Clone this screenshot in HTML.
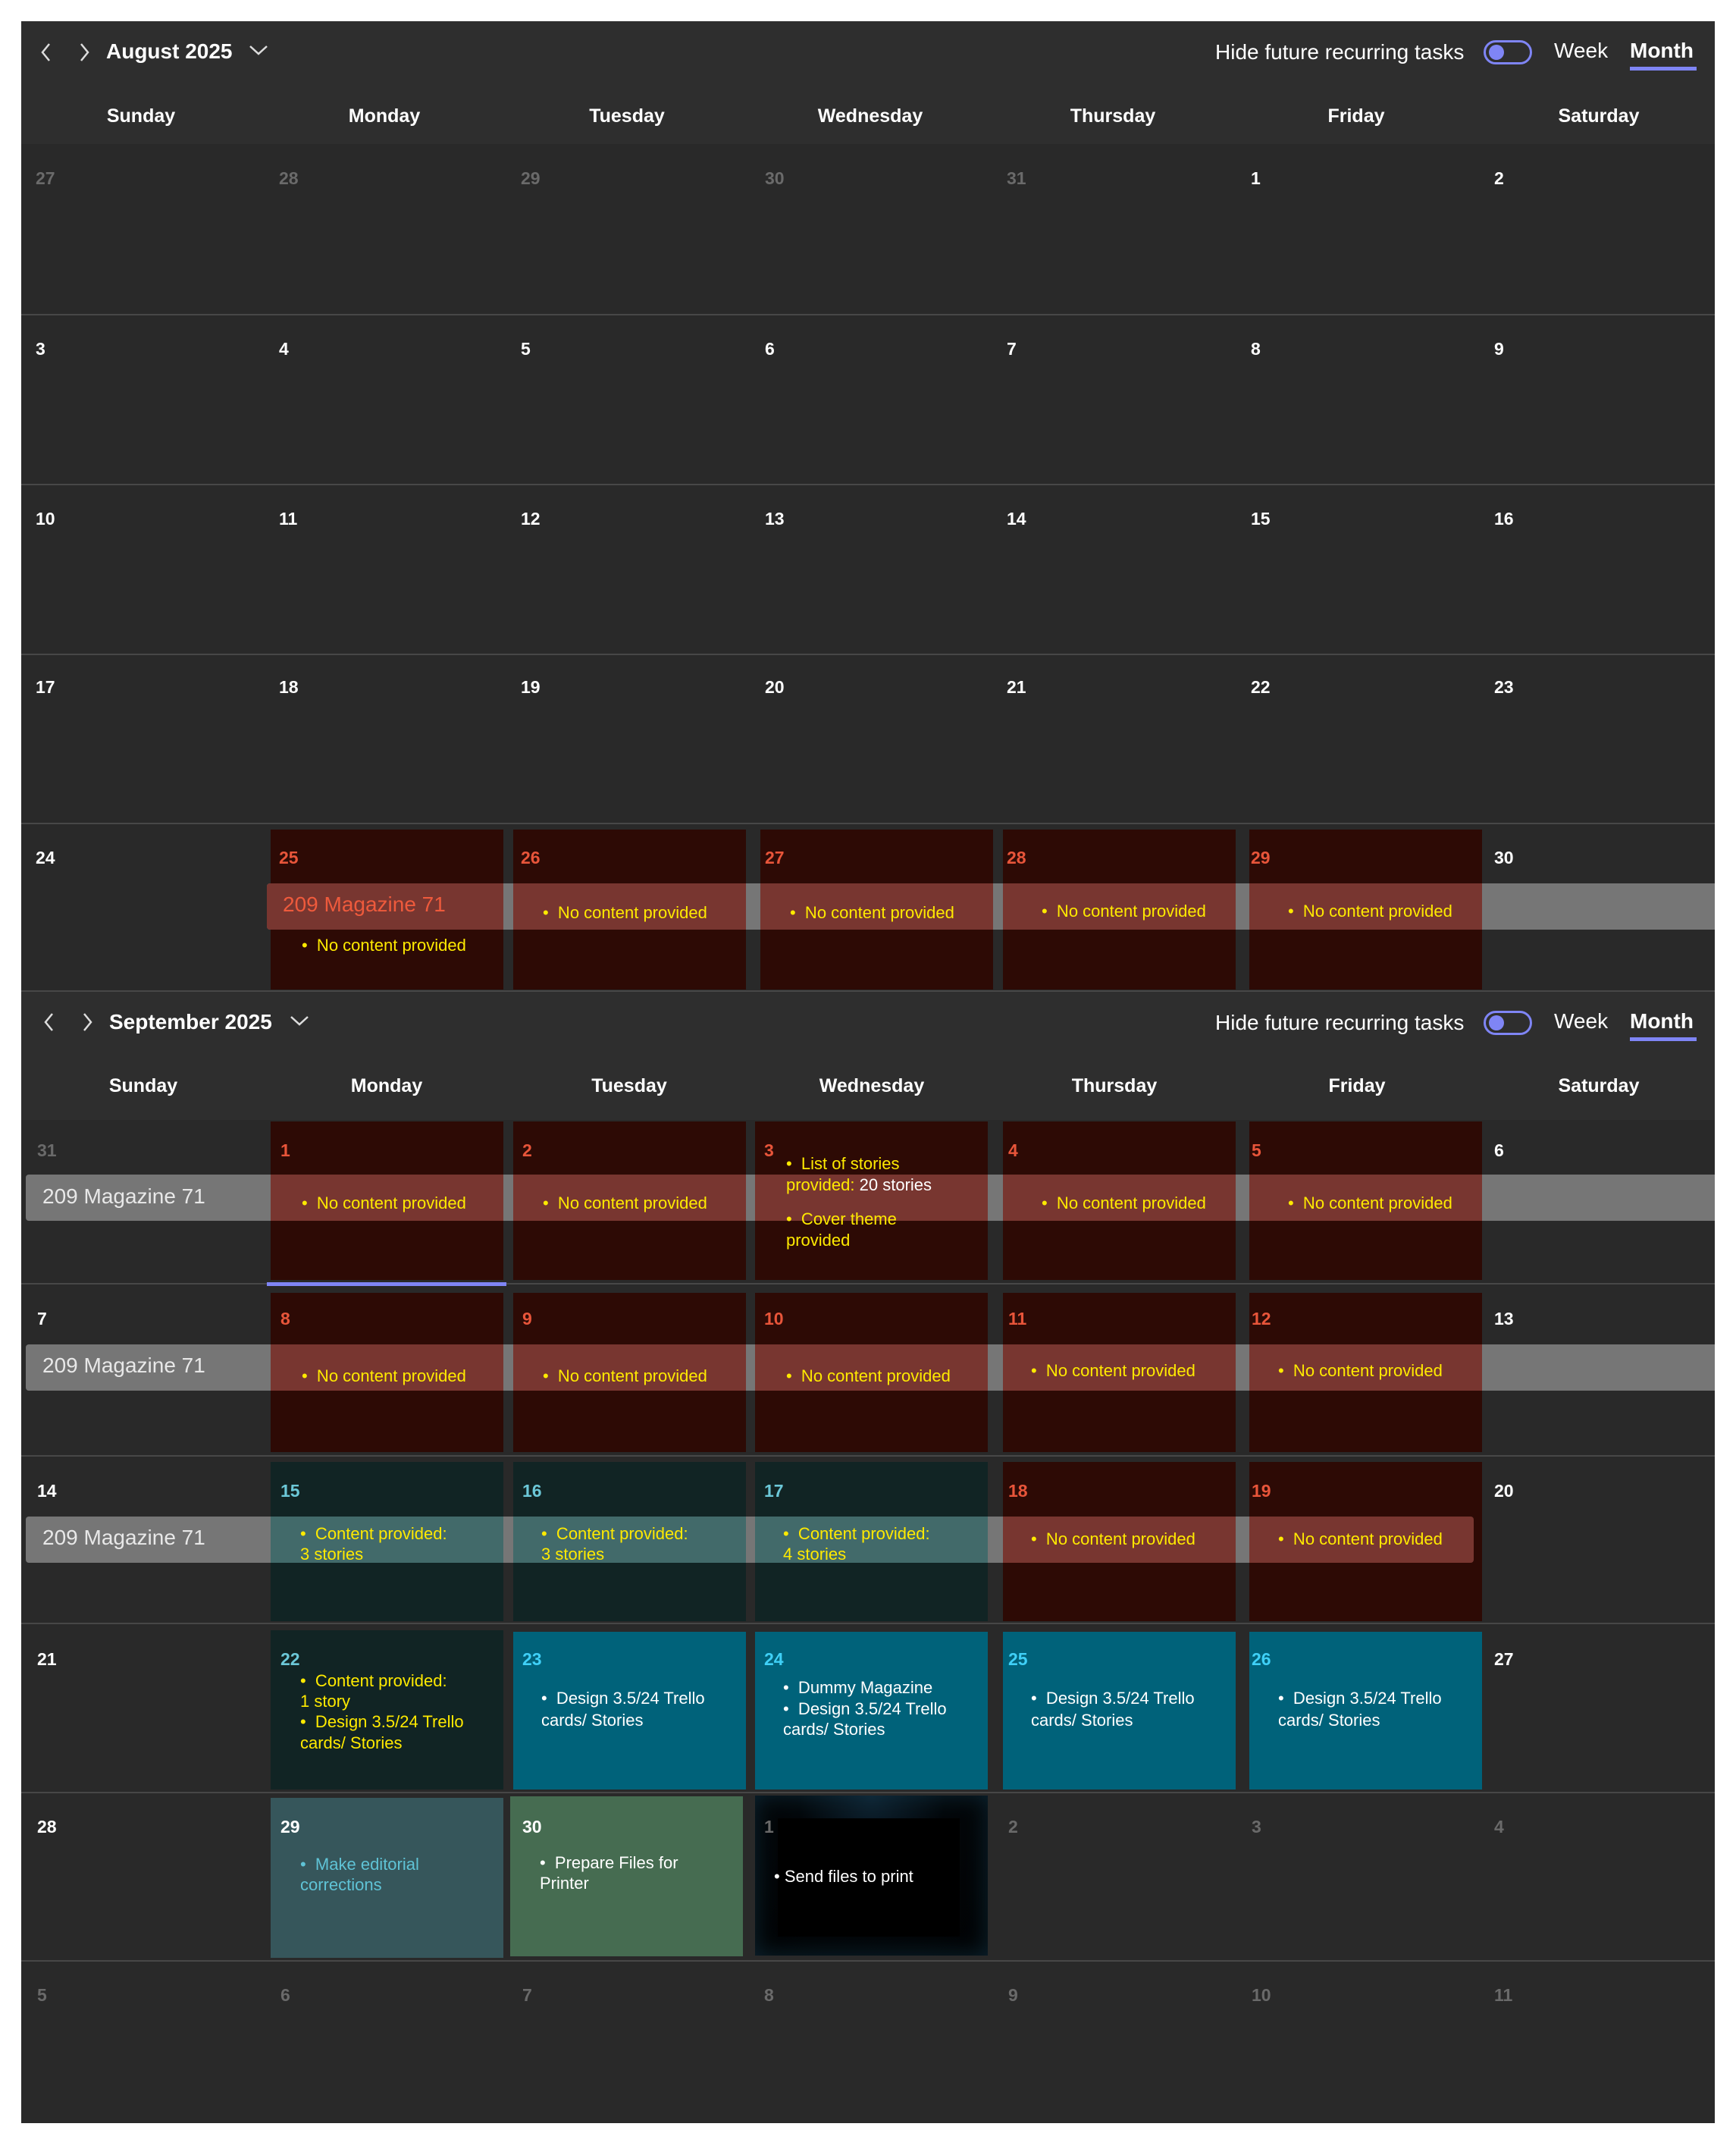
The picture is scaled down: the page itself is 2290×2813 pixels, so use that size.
<!DOCTYPE html>
<html><head><meta charset="utf-8">
<style>
*{margin:0;padding:0;box-sizing:border-box}
body{width:2290px;height:2813px;background:#fff;position:relative;overflow:hidden;font-family:"Liberation Sans",sans-serif}
.p{position:absolute;left:28px;top:28px;width:2234px;height:2772px;background:#292929}
.a{position:absolute}
.hd{position:absolute;left:28px;width:2234px;background:#2e2e2e}
.ln{position:absolute;left:28px;width:2234px;height:2px;background:#474747}
.wd{position:absolute;font-size:25px;font-weight:bold;color:#fff;transform:translateX(-50%);line-height:30px}
.d{position:absolute;font-size:23px;font-weight:bold;color:#fff;line-height:28px}
.g{color:#6a6a6a}
.r{color:#e8553a}
.tl{color:#6cc8d8}
.cy{color:#3fd0f7}
.b{position:absolute}
.red{background:#2d0a05}
.dt{background:#112424}
.bl{background:#00627a}
.band{position:absolute;background:#767676;height:61px}
.bp{position:absolute;height:61px}
.t{position:absolute;font-size:22px;line-height:27px;color:#ffea00;white-space:nowrap}
.w{color:#fff}
.mg{position:absolute;font-size:28px;line-height:34px;white-space:nowrap}
.ttl{position:absolute;font-size:28px;font-weight:bold;color:#fff;line-height:34px}
.rt{position:absolute;font-size:28px;color:#fff;line-height:34px;white-space:nowrap}
.tog{position:absolute;width:64px;height:32px;border:3px solid #7f85f5;border-radius:16px}
.tog:after{content:"";position:absolute;left:4px;top:3px;width:20px;height:20px;border-radius:50%;background:#7f85f5}
.ul{position:absolute;height:5px;background:#7f85f5}
</style></head><body>
<div class="p"></div>

<!-- August header -->
<div class="hd" style="top:28px;height:162px"></div>
<svg class="a" style="left:50px;top:54px" width="80" height="30" viewBox="0 0 80 30"><path d="M15 4 L6 15 L15 26" fill="none" stroke="#ddd" stroke-width="2.5"/><path d="M57 4 L66 15 L57 26" fill="none" stroke="#ddd" stroke-width="2.5"/></svg>
<div class="ttl" style="left:140px;top:51px">August 2025</div>
<svg class="a" style="left:328px;top:58px" width="26" height="16"><path d="M2 3 L13 13 L24 3" fill="none" stroke="#ddd" stroke-width="2.5"/></svg>
<div class="rt" style="left:1603px;top:52px">Hide future recurring tasks</div>
<div class="tog" style="left:1957px;top:53px"></div>
<div class="rt" style="left:2050px;top:50px">Week</div>
<div class="rt" style="left:2150px;top:50px;font-weight:bold">Month</div>
<div class="ul" style="left:2150px;top:88px;width:88px"></div>
<div class="wd" style="left:186px;top:138px">Sunday</div>
<div class="wd" style="left:507px;top:138px">Monday</div>
<div class="wd" style="left:827px;top:138px">Tuesday</div>
<div class="wd" style="left:1148px;top:138px">Wednesday</div>
<div class="wd" style="left:1468px;top:138px">Thursday</div>
<div class="wd" style="left:1789px;top:138px">Friday</div>
<div class="wd" style="left:2109px;top:138px">Saturday</div>

<div class="ln" style="top:414px"></div>
<div class="ln" style="top:638px"></div>
<div class="ln" style="top:862px"></div>
<div class="ln" style="top:1085px"></div>

<!-- Aug dates -->
<div class="d g" style="left:47px;top:221px">27</div><div class="d g" style="left:368px;top:221px">28</div><div class="d g" style="left:687px;top:221px">29</div><div class="d g" style="left:1009px;top:221px">30</div><div class="d g" style="left:1328px;top:221px">31</div><div class="d" style="left:1650px;top:221px">1</div><div class="d" style="left:1971px;top:221px">2</div>
<div class="d" style="left:47px;top:446px">3</div><div class="d" style="left:368px;top:446px">4</div><div class="d" style="left:687px;top:446px">5</div><div class="d" style="left:1009px;top:446px">6</div><div class="d" style="left:1328px;top:446px">7</div><div class="d" style="left:1650px;top:446px">8</div><div class="d" style="left:1971px;top:446px">9</div>
<div class="d" style="left:47px;top:670px">10</div><div class="d" style="left:368px;top:670px">11</div><div class="d" style="left:687px;top:670px">12</div><div class="d" style="left:1009px;top:670px">13</div><div class="d" style="left:1328px;top:670px">14</div><div class="d" style="left:1650px;top:670px">15</div><div class="d" style="left:1971px;top:670px">16</div>
<div class="d" style="left:47px;top:892px">17</div><div class="d" style="left:368px;top:892px">18</div><div class="d" style="left:687px;top:892px">19</div><div class="d" style="left:1009px;top:892px">20</div><div class="d" style="left:1328px;top:892px">21</div><div class="d" style="left:1650px;top:892px">22</div><div class="d" style="left:1971px;top:892px">23</div>

<!-- Aug row 5 -->
<div class="band" style="left:352px;top:1165px;width:1910px;border-radius:4px 0 0 4px"></div>
<div class="b red" style="left:357px;top:1094px;width:307px;height:211px"><div class="bp" style="left:-5px;top:71px;width:312px;background:#783630;border-radius:4px 0 0 4px"></div></div>
<div class="b red" style="left:677px;top:1094px;width:307px;height:211px"><div class="bp" style="left:0;top:71px;width:307px;background:#783630"></div></div>
<div class="b red" style="left:1003px;top:1094px;width:307px;height:211px"><div class="bp" style="left:0;top:71px;width:307px;background:#783630"></div></div>
<div class="b red" style="left:1323px;top:1094px;width:307px;height:211px"><div class="bp" style="left:0;top:71px;width:307px;background:#783630"></div></div>
<div class="b red" style="left:1648px;top:1094px;width:307px;height:211px"><div class="bp" style="left:0;top:71px;width:307px;background:#783630"></div></div>
<div class="d" style="left:47px;top:1117px">24</div><div class="d r" style="left:368px;top:1117px">25</div><div class="d r" style="left:687px;top:1117px">26</div><div class="d r" style="left:1009px;top:1117px">27</div><div class="d r" style="left:1328px;top:1117px">28</div><div class="d r" style="left:1650px;top:1117px">29</div><div class="d" style="left:1971px;top:1117px">30</div>
<div class="mg" style="left:373px;top:1176px;color:#ee5a3c">209 Magazine 71</div>
<div class="t" style="left:398px;top:1233px">•&nbsp; No content provided</div>
<div class="t" style="left:716px;top:1190px">•&nbsp; No content provided</div>
<div class="t" style="left:1042px;top:1190px">•&nbsp; No content provided</div>
<div class="t" style="left:1374px;top:1188px">•&nbsp; No content provided</div>
<div class="t" style="left:1699px;top:1188px">•&nbsp; No content provided</div>

<!-- September header -->
<div class="ln" style="top:1306px"></div>
<div class="hd" style="top:1308px;height:169px"></div>
<svg class="a" style="left:54px;top:1333px" width="80" height="30" viewBox="0 0 80 30"><path d="M15 4 L6 15 L15 26" fill="none" stroke="#ddd" stroke-width="2.5"/><path d="M57 4 L66 15 L57 26" fill="none" stroke="#ddd" stroke-width="2.5"/></svg>
<div class="ttl" style="left:144px;top:1331px">September 2025</div>
<svg class="a" style="left:382px;top:1338px" width="26" height="16"><path d="M2 3 L13 13 L24 3" fill="none" stroke="#ddd" stroke-width="2.5"/></svg>
<div class="rt" style="left:1603px;top:1332px">Hide future recurring tasks</div>
<div class="tog" style="left:1957px;top:1333px"></div>
<div class="rt" style="left:2050px;top:1330px">Week</div>
<div class="rt" style="left:2150px;top:1330px;font-weight:bold">Month</div>
<div class="ul" style="left:2150px;top:1368px;width:88px"></div>
<div class="wd" style="left:189px;top:1417px">Sunday</div>
<div class="wd" style="left:510px;top:1417px">Monday</div>
<div class="wd" style="left:830px;top:1417px">Tuesday</div>
<div class="wd" style="left:1150px;top:1417px">Wednesday</div>
<div class="wd" style="left:1470px;top:1417px">Thursday</div>
<div class="wd" style="left:1790px;top:1417px">Friday</div>
<div class="wd" style="left:2109px;top:1417px">Saturday</div>

<div class="ln" style="top:1692px"></div>
<div class="ln" style="top:1919px"></div>
<div class="ln" style="top:2140px"></div>
<div class="ln" style="top:2363px"></div>
<div class="ln" style="top:2585px"></div>

<!-- Sep row1 -->
<div class="band" style="left:34px;top:1549px;width:2228px;border-radius:4px 0 0 4px"></div>
<div class="b red" style="left:357px;top:1479px;width:307px;height:209px"><div class="bp" style="left:0;top:70px;width:307px;background:#783630"></div></div>
<div class="b red" style="left:677px;top:1479px;width:307px;height:209px"><div class="bp" style="left:0;top:70px;width:307px;background:#783630"></div></div>
<div class="b red" style="left:996px;top:1479px;width:307px;height:209px"><div class="bp" style="left:0;top:70px;width:307px;background:#783630"></div></div>
<div class="b red" style="left:1323px;top:1479px;width:307px;height:209px"><div class="bp" style="left:0;top:70px;width:307px;background:#783630"></div></div>
<div class="b red" style="left:1648px;top:1479px;width:307px;height:209px"><div class="bp" style="left:0;top:70px;width:307px;background:#783630"></div></div>
<div class="ul" style="left:352px;top:1691px;width:316px;height:5px"></div>
<div class="d g" style="left:49px;top:1503px">31</div><div class="d r" style="left:370px;top:1503px">1</div><div class="d r" style="left:689px;top:1503px">2</div><div class="d r" style="left:1008px;top:1503px">3</div><div class="d r" style="left:1330px;top:1503px">4</div><div class="d r" style="left:1651px;top:1503px">5</div><div class="d" style="left:1971px;top:1503px">6</div>
<div class="mg w" style="left:56px;top:1561px;color:#e8e8e8">209 Magazine 71</div>
<div class="t" style="left:398px;top:1573px">•&nbsp; No content provided</div>
<div class="t" style="left:716px;top:1573px">•&nbsp; No content provided</div>
<div class="t" style="left:1037px;top:1521px">•&nbsp; List of stories</div>
<div class="t" style="left:1037px;top:1549px">provided: <span class="w">20 stories</span></div>
<div class="t" style="left:1037px;top:1594px">•&nbsp; Cover theme</div>
<div class="t" style="left:1037px;top:1622px">provided</div>
<div class="t" style="left:1374px;top:1573px">•&nbsp; No content provided</div>
<div class="t" style="left:1699px;top:1573px">•&nbsp; No content provided</div>

<!-- Sep row2 -->
<div class="band" style="left:34px;top:1773px;width:2228px;border-radius:4px 0 0 4px"></div>
<div class="b red" style="left:357px;top:1705px;width:307px;height:210px"><div class="bp" style="left:0;top:68px;width:307px;background:#783630"></div></div>
<div class="b red" style="left:677px;top:1705px;width:307px;height:210px"><div class="bp" style="left:0;top:68px;width:307px;background:#783630"></div></div>
<div class="b red" style="left:996px;top:1705px;width:307px;height:210px"><div class="bp" style="left:0;top:68px;width:307px;background:#783630"></div></div>
<div class="b red" style="left:1323px;top:1705px;width:307px;height:210px"><div class="bp" style="left:0;top:68px;width:307px;background:#783630"></div></div>
<div class="b red" style="left:1648px;top:1705px;width:307px;height:210px"><div class="bp" style="left:0;top:68px;width:307px;background:#783630"></div></div>
<div class="d" style="left:49px;top:1725px">7</div><div class="d r" style="left:370px;top:1725px">8</div><div class="d r" style="left:689px;top:1725px">9</div><div class="d r" style="left:1008px;top:1725px">10</div><div class="d r" style="left:1330px;top:1725px">11</div><div class="d r" style="left:1651px;top:1725px">12</div><div class="d" style="left:1971px;top:1725px">13</div>
<div class="mg" style="left:56px;top:1784px;color:#e8e8e8">209 Magazine 71</div>
<div class="t" style="left:398px;top:1801px">•&nbsp; No content provided</div>
<div class="t" style="left:716px;top:1801px">•&nbsp; No content provided</div>
<div class="t" style="left:1037px;top:1801px">•&nbsp; No content provided</div>
<div class="t" style="left:1360px;top:1794px">•&nbsp; No content provided</div>
<div class="t" style="left:1686px;top:1794px">•&nbsp; No content provided</div>

<!-- Sep row3 -->
<div class="band" style="left:34px;top:2000px;width:1910px;border-radius:4px"></div>
<div class="b dt" style="left:357px;top:1928px;width:307px;height:210px"><div class="bp" style="left:0;top:72px;width:307px;background:#426a6a"></div></div>
<div class="b dt" style="left:677px;top:1928px;width:307px;height:210px"><div class="bp" style="left:0;top:72px;width:307px;background:#426a6a"></div></div>
<div class="b dt" style="left:996px;top:1928px;width:307px;height:210px"><div class="bp" style="left:0;top:72px;width:307px;background:#426a6a"></div></div>
<div class="b red" style="left:1323px;top:1928px;width:307px;height:210px"><div class="bp" style="left:0;top:72px;width:307px;background:#783630"></div></div>
<div class="b red" style="left:1648px;top:1928px;width:307px;height:210px"><div class="bp" style="left:0;top:72px;width:296px;background:#783630;border-radius:0 4px 4px 0"></div></div>
<div class="d" style="left:49px;top:1952px">14</div><div class="d tl" style="left:370px;top:1952px">15</div><div class="d tl" style="left:689px;top:1952px">16</div><div class="d tl" style="left:1008px;top:1952px">17</div><div class="d r" style="left:1330px;top:1952px">18</div><div class="d r" style="left:1651px;top:1952px">19</div><div class="d" style="left:1971px;top:1952px">20</div>
<div class="mg" style="left:56px;top:2011px;color:#e8e8e8">209 Magazine 71</div>
<div class="t" style="left:396px;top:2009px">•&nbsp; Content provided:</div><div class="t" style="left:396px;top:2036px">3 stories</div>
<div class="t" style="left:714px;top:2009px">•&nbsp; Content provided:</div><div class="t" style="left:714px;top:2036px">3 stories</div>
<div class="t" style="left:1033px;top:2009px">•&nbsp; Content provided:</div><div class="t" style="left:1033px;top:2036px">4 stories</div>
<div class="t" style="left:1360px;top:2016px">•&nbsp; No content provided</div>
<div class="t" style="left:1686px;top:2016px">•&nbsp; No content provided</div>

<!-- Sep row4 -->
<div class="b dt" style="left:357px;top:2150px;width:307px;height:210px"></div>
<div class="b bl" style="left:677px;top:2152px;width:307px;height:208px"></div>
<div class="b bl" style="left:996px;top:2152px;width:307px;height:208px"></div>
<div class="b bl" style="left:1323px;top:2152px;width:307px;height:208px"></div>
<div class="b bl" style="left:1648px;top:2152px;width:307px;height:208px"></div>
<div class="d" style="left:49px;top:2174px">21</div><div class="d tl" style="left:370px;top:2174px">22</div><div class="d cy" style="left:689px;top:2174px">23</div><div class="d cy" style="left:1008px;top:2174px">24</div><div class="d cy" style="left:1330px;top:2174px">25</div><div class="d cy" style="left:1651px;top:2174px">26</div><div class="d" style="left:1971px;top:2174px">27</div>
<div class="t" style="left:396px;top:2203px">•&nbsp; Content provided:</div><div class="t" style="left:396px;top:2230px">1 story</div>
<div class="t" style="left:396px;top:2257px">•&nbsp; Design 3.5/24 Trello</div><div class="t" style="left:396px;top:2285px">cards/ Stories</div>
<div class="t w" style="left:714px;top:2226px">•&nbsp; Design 3.5/24 Trello</div><div class="t w" style="left:714px;top:2255px">cards/ Stories</div>
<div class="t w" style="left:1033px;top:2212px">•&nbsp; Dummy Magazine</div><div class="t w" style="left:1033px;top:2240px">•&nbsp; Design 3.5/24 Trello</div><div class="t w" style="left:1033px;top:2267px">cards/ Stories</div>
<div class="t w" style="left:1360px;top:2226px">•&nbsp; Design 3.5/24 Trello</div><div class="t w" style="left:1360px;top:2255px">cards/ Stories</div>
<div class="t w" style="left:1686px;top:2226px">•&nbsp; Design 3.5/24 Trello</div><div class="t w" style="left:1686px;top:2255px">cards/ Stories</div>

<!-- Sep row5 -->
<div class="b" style="left:357px;top:2371px;width:307px;height:211px;background:#36565b"></div>
<div class="b" style="left:673px;top:2369px;width:307px;height:211px;background:#466c51"></div>
<div class="b" style="left:996px;top:2368px;width:307px;height:211px;background:radial-gradient(ellipse at 50% 0%,#0e2230 0%,#03070a 45%,#020304 100%);box-shadow:inset 0 0 30px rgba(20,60,80,0.6)"><div class="a" style="left:30px;top:30px;width:240px;height:156px;background:#000"></div></div>
<div class="d" style="left:49px;top:2395px">28</div><div class="d" style="left:370px;top:2395px">29</div><div class="d" style="left:689px;top:2395px">30</div><div class="d g" style="left:1008px;top:2395px">1</div><div class="d g" style="left:1330px;top:2395px">2</div><div class="d g" style="left:1651px;top:2395px">3</div><div class="d g" style="left:1971px;top:2395px">4</div>
<div class="t" style="left:396px;top:2445px;color:#5fc3d6">•&nbsp; Make editorial</div><div class="t" style="left:396px;top:2472px;color:#5fc3d6">corrections</div>
<div class="t w" style="left:712px;top:2443px">•&nbsp; Prepare Files for</div><div class="t w" style="left:712px;top:2470px">Printer</div>
<div class="t w" style="left:1021px;top:2461px">•&nbsp;Send files to print</div>

<!-- Sep row6 -->
<div class="d g" style="left:49px;top:2617px">5</div><div class="d g" style="left:370px;top:2617px">6</div><div class="d g" style="left:689px;top:2617px">7</div><div class="d g" style="left:1008px;top:2617px">8</div><div class="d g" style="left:1330px;top:2617px">9</div><div class="d g" style="left:1651px;top:2617px">10</div><div class="d g" style="left:1971px;top:2617px">11</div>
</body></html>
